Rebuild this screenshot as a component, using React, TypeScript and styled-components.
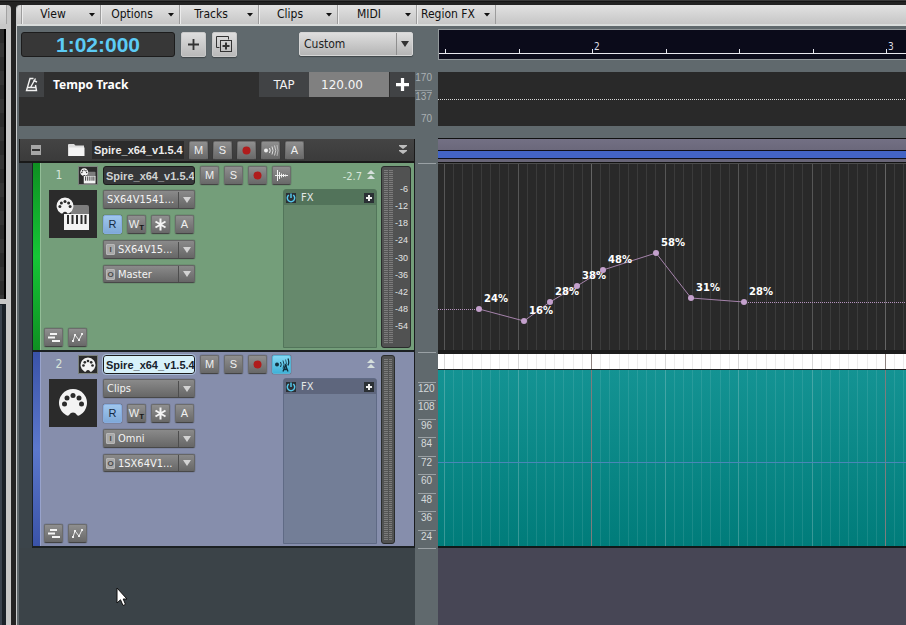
import React from "react";
import styled, { createGlobalStyle, css } from "styled-components";

const ui = `"DejaVu Sans Condensed", "DejaVu Sans", sans-serif`;
const sans = `"Liberation Sans", Arial, sans-serif`;

type Kind = "synth" | "midi";

const Global = createGlobalStyle`
  * { box-sizing: border-box; }
  body { margin: 0; background: #232323; font-family: ${ui}; overflow: hidden; }
  button, select, input { font-family: inherit; margin: 0; padding: 0; border: 0; border-radius: 0; }
  svg { display: block; flex: none; }
`;

const Page = styled.div`
  position: relative;
  display: flex;
  min-height: 100vh;
  padding-top: 5px;
  background: linear-gradient(#3a3a3a 0 1px, #161616 1px 2px, #232323 2px);
`;

/* neighbouring pane, only its right edge is visible */
const SidePane = styled.aside`
  display: flex;
  flex-direction: column;
  width: 11px;
  margin-right: 5px;
  background: #c8c8c8;
  border-radius: 0 4px 0 0;
`;
const SideHead = styled.div`
  height: 19px;
  margin-bottom: 5px;
  width: 7px;
  border-right: 1px solid #a2a2a2;
  background: linear-gradient(#e0e0e0, #cbcbcb);
`;
const SideList = styled.div`
  height: 270px;
  width: 6px;
  margin-bottom: 5px;
  border-right: 2px solid #000;
  background: repeating-linear-gradient(#2c2c2c 0 14px, #353535 14px 28px);
`;
const SideFill = styled.div`
  flex: 1;
  width: 6px;
  border-right: 4px solid #1b2229;
  border-top: 1px solid #1b2229;
  background: #3a434e;
`;

const Main = styled.main`
  flex: 1;
  min-width: 0;
  display: flex;
  flex-direction: column;
  border-left: 1px solid #c9cbcc;
  border-radius: 4px 0 0 0;
  background: #60696d;
`;

const MenuBar = styled.nav`
  display: flex;
  height: 21px;
  padding-left: 4px;
  border-bottom: 2px solid #d9dcdb;
  border-radius: 4px 0 0 0;
  background: linear-gradient(#e2e2e2, #c6c6c6);
`;
const MenuButton = styled.button`
  display: flex;
  align-items: center;
  width: 79px;
  border-left: 1px solid #9c9c9c;
  box-shadow: inset 1px 0 #ececec;
  background: transparent;
  color: #111;
  font-size: 12px;
  line-height: 18px;
  white-space: nowrap;
  &:last-child { width: 80px; border-right: 1px solid #9c9c9c; }
`;
const MenuText = styled.span`
  width: 62px;
  padding-bottom: 1px;
  text-align: center;
`;
const Spacer = styled.span`
  flex: 1;
  & + svg { margin-right: 5px; }
`;
const Gap = styled.div`
  height: 12px;
`;

const Row = styled.div<{ $h?: number; $grow?: boolean }>`
  display: grid;
  grid-template-columns: 396px 23px minmax(0, 1fr);
  margin-left: 2px;
  ${(p) => p.$h && css`min-height: ${p.$h}px;`}
  ${(p) => p.$grow && css`flex: 1;`}
`;

const Toolbar = styled.div`
  display: flex;
  align-items: flex-start;
  padding: 6px 2px 0;
`;
const TimeDisplay = styled.output`
  width: 154px;
  height: 25px;
  margin-right: 6px;
  border: 1px solid #1c1c1c;
  border-radius: 3px;
  background: #373737;
  color: #5ccbf5;
  font: bold 21px/23px ${sans};
  text-align: center;
`;
const LightButton = styled.button`
  display: grid;
  place-items: center;
  width: 25px;
  height: 25px;
  margin-right: 6px;
  border: 1px solid #c9c9c9;
  border-radius: 2px;
  background: linear-gradient(#dedede, #b9b9b9);
  box-shadow: 0 1px 1px #3f4548;
`;
const PresetBox = styled.div`
  display: flex;
  align-items: center;
  width: 114px;
  height: 24px;
  margin-left: auto;
  border: 1px solid #d6d6d6;
  border-radius: 2px;
  background: linear-gradient(#dedede, #b5b5b5);
  box-shadow: 0 1px 1px #3f4548;
`;
const PresetSelect = styled.select`
  appearance: none;
  flex: 1;
  height: 22px;
  padding-left: 4px;
  border-right: 1px solid #8e8e8e;
  background: transparent;
  color: #222;
  font-size: 12px;
`;
const PresetArrow = styled.span`
  display: grid;
  place-items: center;
  width: 15px;
`;

const RulerBox = styled.div`
  height: 31px;
  margin-top: 3px;
  border: 1px solid #92989b;
  border-right: 0;
  background: #0b0b1a;
`;

const TempoPanel = styled.section`
  background: #2f2f2f;
`;
const TempoHead = styled.div`
  display: flex;
  height: 25px;
`;
const TempoIcon = styled.button`
  display: grid;
  place-items: center;
  width: 25px;
  background: #414345;
`;
const TempoTitle = styled.h2`
  flex: 1;
  margin: 0;
  padding-left: 9px;
  color: #fff;
  font: bold 12px/25px "Noto Sans", sans-serif;
`;
const TapButton = styled.button`
  width: 50px;
  background: #414345;
  color: #f1f1f1;
  font-size: 13px;
`;
const TempoInput = styled.input`
  width: 80px;
  padding: 2px 0 0 12px;
  background: #808080;
  color: #f6f6f6;
  font: 12px/23px "DejaVu Sans", sans-serif;
`;
const TempoAdd = styled.button`
  display: grid;
  place-items: center;
  width: 25px;
  margin-left: 1px;
  background: #414345;
`;
const TempoLane = styled.div`
  padding-top: 27px;
  background: #292929;
`;

const TempoScale = styled.div`
  display: flex;
  flex-direction: column;
  padding-right: 6px;
  color: #aab0b3;
  font: 10px/12px ${sans};
  text-align: right;
`;
const ScaleText = styled.span<{ $line?: boolean; $last?: boolean }>`
  ${(p) => p.$line && css`margin-top: 6px; border-top: 1px solid #8f979b;`}
  ${(p) => p.$last && css`margin-top: 10px;`}
`;

const FolderBar = styled.header`
  display: flex;
  align-items: center;
  margin-top: 1px;
  border-left: 1px solid #1a1a1a;
  border-right: 1px solid #1a1a1a;
  border-bottom: 2px solid #191919;
  background: linear-gradient(#444, #3b3b3b);
`;
const FolderToggle = styled.button`
  display: grid;
  place-items: center;
  width: 32px;
  height: 22px;
  margin-right: 16px;
  background: transparent;
`;
const FolderName = styled.input`
  width: 92px;
  height: 18px;
  margin: 0 5px 0 7px;
  padding-left: 2px;
  background: #2b2b2b;
  color: #ececec;
  font: bold 11px/18px ${sans};
`;
const FolderMore = styled.button`
  margin-right: 7px;
  background: transparent;
`;
const FolderLane = styled.div`
  border-top: 1px solid #111;
  border-bottom: 1px solid #111;
  background: linear-gradient(#737084, #6b687b 11px, #101018 11px 12px, #4364c6 12px 19px, #101018 19px 20px, #696678 20px);
`;

const Btn = styled.button<{ $tone?: "blue" | "cyan" }>`
  display: grid;
  place-items: center;
  flex: none;
  width: 19px;
  height: 19px;
  margin-right: 5px;
  border: 1px solid #6c6c6c;
  border-bottom-color: #444;
  border-radius: 2px;
  background: linear-gradient(#8f8f8f, #686868);
  box-shadow: 0 0 1px #222;
  color: #f0f0f0;
  font: 11px/17px ${sans};
  ${(p) => p.$tone === "blue" && css`background: linear-gradient(#9fc6ee, #7fa9d8); border-color: #86ace0; color: #152a44;`}
  ${(p) => p.$tone === "cyan" && css`background: linear-gradient(#83d9f3, #3fb1d8); border-color: #55b4d4;`}
`;
const WriteMark = styled.span`
  display: flex;
  align-items: flex-end;
  line-height: 15px;
  sub { color: #161616; font: bold 8px/9px ${sans}; }
`;

const Indent = styled.div`
  display: flex;
  padding-left: 13px;
  background: #3b444a;
`;
const Track = styled.section<{ $kind: Kind }>`
  flex: 1;
  display: flex;
  border-left: 1px solid #1b2226;
  border-right: 1px solid #1a1c1f;
  border-bottom: 2px solid #1b2022;
  background: ${(p) => (p.$kind === "synth" ? "#749e7a" : "#868eac")};
`;
const ColorStrip = styled.div<{ $kind: Kind }>`
  width: 8px;
  border-right: 1px solid ${(p) => (p.$kind === "synth" ? "#93bd97" : "#98a3cc")};
  background: ${(p) =>
    p.$kind === "synth"
      ? "linear-gradient(#0f8f22, #16c636 50%, #0f8f22)"
      : "linear-gradient(#3a53a8, #5c78cc 50%, #3a53a8)"};
`;
const TrackMain = styled.div`
  flex: 1;
  display: flex;
  flex-direction: column;
  padding: 3px 4px 2px 2px;
`;
const TrackHead = styled.div`
  display: flex;
  height: 19px;
  margin-bottom: 4px;
`;
const TrackNumber = styled.span`
  width: 35px;
  padding-right: 3px;
  color: #d8e4da;
  font: 12px/19px ${ui};
  text-align: center;
`;
const TrackBadge = styled.span`
  display: grid;
  place-items: center;
  width: 20px;
  height: 19px;
  margin-right: 5px;
  border: 1px solid #7b817d;
  background: #2b2b2b;
`;
const TrackName = styled.input<{ $active?: boolean }>`
  width: 92px;
  height: 19px;
  margin-right: 5px;
  padding-left: 2px;
  border: 1px solid #1c1c1c;
  border-radius: 3px;
  background: ${(p) => (p.$active ? "#d7f1fa" : "#363739")};
  color: ${(p) => (p.$active ? "#17222c" : "#cfd2d2")};
  font: bold 11px/17px ${sans};
  outline: 1px solid ${(p) => (p.$active ? "#a9bfdb" : "transparent")};
`;
const Gain = styled.span`
  display: flex;
  margin: 0 2px 0 auto;
  gap: 5px;
  color: #d7e5d9;
  font: 11px/21px ${ui};
  svg { margin-top: 4px; }
`;
const TrackBody = styled.div`
  flex: 1;
  display: flex;
`;
const IconColumn = styled.div`
  display: flex;
  flex-direction: column;
  width: 60px;
  padding-top: 1px;
`;
const TrackIcon = styled.div`
  display: grid;
  place-items: center;
  width: 48px;
  height: 48px;
  margin-left: 6px;
  background: #2b2b2b;
`;
const LaneButtons = styled.div`
  display: flex;
  margin-top: auto;
  padding: 0 0 1px 1px;
`;
const Controls = styled.div`
  display: flex;
  flex-direction: column;
  gap: 6px;
  width: 92px;
  padding-top: 1px;
`;
const BtnRow = styled.div`
  display: flex;
`;
const Picker = styled.div`
  display: flex;
  align-items: center;
  height: 19px;
  border: 1px solid #656565;
  border-bottom-color: #484848;
  border-radius: 2px;
  background: linear-gradient(#8a8a8a, #666);
  box-shadow: 0 0 1px #222;
  svg { margin: 0 auto; }
  & + & { height: 18px; }
`;
const PortMark = styled.span`
  width: 9px;
  height: 11px;
  margin: 0 1px 0 2px;
  border: 1px solid #b8b8b8;
  border-radius: 1px;
  background: #a9a9a9;
  color: #4a4a4a;
  font: bold 8px/9px ${sans};
  text-align: center;
`;
const PickerSelect = styled.select<{ $port?: boolean }>`
  appearance: none;
  width: ${(p) => (p.$port ? 63 : 75)}px;
  height: 16px;
  padding-left: ${(p) => (p.$port ? 2 : 3)}px;
  border-right: 1px solid #4d4d4d;
  background: transparent;
  color: #f4f4f4;
  font-size: 11px;
`;

const FxBin = styled.div<{ $kind: Kind }>`
  width: 94px;
  margin-left: auto;
  border: 1px solid ${(p) => (p.$kind === "synth" ? "#52755a" : "#5f6a85")};
  border-radius: 3px 3px 0 0;
  background: ${(p) => (p.$kind === "synth" ? "#66896c" : "#737e97")};
`;
const FxHead = styled.div<{ $kind: Kind }>`
  display: flex;
  align-items: center;
  height: 15px;
  padding: 0 2px;
  background: ${(p) => (p.$kind === "synth" ? "#52735a" : "#5e667d")};
  color: #e3e8e6;
  font: 11px/15px ${ui};
  span { flex: 1; padding-left: 5px; }
`;
const TinyButton = styled.button`
  display: grid;
  place-items: center;
  width: 10px;
  height: 10px;
  background: #2b3035;
`;

const MeterWrap = styled.div<{ $wide: boolean }>`
  display: flex;
  width: ${(p) => (p.$wide ? 30 : 14)}px;
  margin: 3px ${(p) => (p.$wide ? 3 : 19)}px 2px 0;
  padding: 3px 2px;
  gap: 1px;
  border: 1px solid #2a2c2c;
  border-radius: 3px;
  background: #515252;
`;
const MeterBar = styled.div`
  width: 4px;
  background: repeating-linear-gradient(#7b7b7b 0 1px, #555 1px 2px);
`;
const MeterScale = styled.div`
  flex: 1;
  display: flex;
  flex-direction: column;
  justify-content: space-between;
  padding: 13px 0 12px;
  color: #e2e2e2;
  font: 9px/12px ${sans};
  text-align: right;
`;

const LaneScale = styled.div`
  display: flex;
  flex-direction: column;
  padding: 0 2px 0 3px;
`;
const ScaleTop = styled.div<{ $h?: number }>`
  height: ${(p) => p.$h ?? 2}px;
  border-top: 1px solid #9aa1a5;
`;
const ScaleStep = styled.div`
  flex: 1;
  padding-right: 4px;
  border-top: 1px solid #9aa1a5;
  color: #d5dadb;
  font: 10px/12px ${sans};
  text-align: right;
`;

const AutoLane = styled.div`
  overflow: hidden;
  border-top: 1px solid #4d4d4d;
  border-bottom: 2px solid #1c1c1c;
  background: #292929;
`;
const ClipLane = styled.div`
  display: flex;
  flex-direction: column;
  padding-top: 2px;
  overflow: hidden;
  border-bottom: 2px solid #101818;
  background: #1d1d1d;
`;
const ClipHead = styled.div`
  height: 15px;
  overflow: hidden;
  background: #fff;
`;
const ClipBody = styled.div`
  flex: 1;
  margin-top: 1px;
  overflow: hidden;
  background: linear-gradient(#149393, #007c7a);
`;
const EmptyTracks = styled.div`
  background: #3b4348;
`;
const EmptyLanes = styled.div`
  background: #474655;
`;
const Pointer = styled.svg`
  position: absolute;
  left: 116px;
  top: 587px;
`;

const barLines = Array.from({ length: 440 }, (_, i) => ({
  x: Math.round(6 + (i * 73.5) / 8),
  beat: i % 8 === 0,
  bar: i % 32 === 16,
}));

function GridLines({ minor, beat, bar }: { minor: string; beat: string; bar: string }) {
  return (
    <g shapeRendering="crispEdges">
      {barLines.map((l) => (
        <rect key={l.x} x={l.x} y="0" width="1" height="400" fill={l.bar ? bar : l.beat ? beat : minor} />
      ))}
    </g>
  );
}

function TimeRuler() {
  return (
    <svg width="100%" height="29" shapeRendering="crispEdges" aria-label="Measures">
      <rect y="23" width="100%" height="1" fill="#e8e8ee" />
      {barLines.filter((l) => l.beat).map((l) => (
        <rect key={l.x} x={l.x} y="19" width="1" height="4" fill="#e8e8ee" />
      ))}
      <g fill="#dcdce4" fontFamily={ui} fontSize="10">
        <text x="155" y="20">2</text>
        <text x="449" y="20">3</text>
      </g>
    </svg>
  );
}

const nodes = [
  { x: 41, y: 145, v: 24 },
  { x: 86, y: 157, v: 16 },
  { x: 112, y: 138, v: 28 },
  { x: 139, y: 122, v: 38 },
  { x: 165, y: 106, v: 48 },
  { x: 218, y: 89, v: 58 },
  { x: 253, y: 134, v: 31 },
  { x: 306, y: 138, v: 28 },
];

function Envelope() {
  return (
    <svg width="100%" height="186" aria-label="Automation envelope">
      <GridLines minor="#3b3b3b" beat="#565656" bar="#646464" />
      <line x1="0" y1="145.5" x2="41" y2="145.5" stroke="#b493bd" strokeDasharray="1 1" />
      <line x1="306" y1="138.5" x2="4000" y2="138.5" stroke="#b493bd" strokeDasharray="1 1" />
      <polyline points={nodes.map((n) => `${n.x},${n.y}`).join(" ")} fill="none" stroke="#a583ab" />
      {nodes.map((n) => (
        <g key={n.x}>
          <circle cx={n.x} cy={n.y} r="3" fill="#c3a0cc" />
          <text x={n.x + 5} y={n.y - 7} fill="#fff" fontFamily='"DejaVu Sans", sans-serif' fontSize="10" fontWeight="bold">
            {n.v}%
          </text>
        </g>
      ))}
    </svg>
  );
}

const Caret = ({ size = 7, color = "#111" }: { size?: number; color?: string }) => (
  <svg width={size} height={size} viewBox="0 0 8 8"><path d="M0 1h8L4 7z" fill={color} /></svg>
);
const MenuCaret = () => (
  <svg width="6" height="4" viewBox="0 0 6 4"><path d="M0 0h6L3 3.5z" fill="#111" /></svg>
);
const Plus = ({ size, color, weight }: { size: number; color: string; weight: number }) => (
  <svg width={size} height={size} viewBox="0 0 12 12">
    <path d="M6 0v12M0 6h12" stroke={color} strokeWidth={weight} />
  </svg>
);
const Chevrons = ({ up }: { up?: boolean }) => (
  <svg width="8" height="10" viewBox="0 0 8 10">
    {up ? <path d="M4 0l4 4H0zM4 5l4 4H0z" fill="#d5dfdc" /> : <path d="M0 0h8v1L4 4 0 1zM0 5h8v1L4 9 0 6z" fill="#bdbdbd" />}
  </svg>
);
const RecDot = () => (
  <svg width="9" height="9"><circle cx="4.5" cy="4.5" r="4" fill="#b01c1c" /></svg>
);
const Echo = ({ auto }: { auto?: boolean }) => (
  <svg width="17" height="17" viewBox="0 0 17 17" fill="none" stroke={auto ? "#12303e" : "#eee"}>
    <circle cx="4" cy="8.5" r="2" fill={auto ? "#12303e" : "#eee"} stroke="none" />
    <path d="M7.5 6q1.5 2.5 0 5" />
    <path d="M10 4.5q2 4 0 8" opacity=".85" />
    <path d="M12.5 3.5q2.5 5 0 10" opacity=".7" />
    {auto ? (
      <path d="M10 15.5l2.5-6.5 2.5 6.5M11 13.5h3M15 2.5q1.5 4 0 7" strokeWidth="1.3" />
    ) : (
      <path d="M15 3q2 5.5 0 11" opacity=".5" />
    )}
  </svg>
);
const Wave = () => (
  <svg width="15" height="15" viewBox="0 0 15 15" stroke="#f2f2f2" fill="none">
    <path d="M1 7.5h13M3.5 2v11M5.5 4v7M7.5 5.5v4M9.5 6v3M11.5 6.5v2" />
  </svg>
);
const Star = () => (
  <svg width="13" height="13" viewBox="0 0 13 13" stroke="#f4f4f4" strokeWidth="2">
    <path d="M6.5 .5v12M1.5 3.5l10 6M11.5 3.5l-10 6" />
  </svg>
);
const LanesIcon = () => (
  <svg width="13" height="11" viewBox="0 0 13 11" fill="#f4f4f4">
    <path d="M3 1h7v2H3zM1 4.5h7v2H1zM5 8h8v2H5z" />
  </svg>
);
const EnvIcon = () => (
  <svg width="13" height="11" viewBox="0 0 13 11" fill="#eee" stroke="#eee">
    <path d="M2 9l2-6 4 5 3-6" fill="none" />
    <path d="M1 8h2v2H1zM3 2h2v2H3zM7 7h2v2H7zM10 1h2v2h-2z" stroke="none" />
  </svg>
);
const Power = () => (
  <svg width="10" height="10" viewBox="0 0 10 10" fill="none" stroke="#55c6ea" strokeWidth="1.5">
    <path d="M5 .5V5M2.8 2a3.7 3.7 0 1 0 4.4 0" />
  </svg>
);
const Metronome = () => (
  <svg width="14" height="15" viewBox="0 0 14 15" fill="none" stroke="#f2f2f2" strokeWidth="1.4">
    <path d="M8.5 1.5H5L1.5 13.5h10L10.5 8M3 10.5h7.5M5.5 10.5l5-9" />
    <path d="M8.5 3.5L12 5" />
  </svg>
);
const Duplicate = () => (
  <svg width="17" height="17" viewBox="0 0 17 17" fill="none" stroke="#333">
    <path d="M3.5 11.5h-3V.5h12v3" />
    <rect x="4.5" y="4.5" width="11" height="11" />
    <path d="M10 6.5v7M6.5 10h7" strokeWidth="2" />
  </svg>
);
const Folder = () => (
  <svg width="17" height="14" viewBox="0 0 17 14">
    <path d="M0 13V2q0-1 1-1h5l1.5 1.5H16V13z" fill="#ddd" />
    <path d="M1 13V4.5h15.5V13z" fill="#f4f4f4" />
  </svg>
);

function DinPlug() {
  return (
    <g>
      <path d="M8 27A14 14 0 1 1 22 27Q19.5 28.5 18.5 26.5Q17.5 24.5 15 24.5Q12.5 24.5 11.5 26.5Q10.5 28.5 8 27z" fill="#f3f3f3" />
      <g fill="#2b2b2b">
        <circle cx="6.5" cy="16" r="2.5" />
        <circle cx="9" cy="10" r="2.5" />
        <circle cx="15" cy="7.5" r="2.5" />
        <circle cx="21" cy="10" r="2.5" />
        <circle cx="23.5" cy="16" r="2.5" />
      </g>
    </g>
  );
}
function KindIcon({ kind, size }: { kind: Kind; size: number }) {
  if (kind === "midi")
    return (
      <svg width={size} height={size} viewBox="0 0 30 30"><DinPlug /></svg>
    );
  return (
    <svg width={size} height={size} viewBox="0 0 34 34">
      <path d="M9 8h22a2 2 0 0 1 2 2v8H16z" fill="#7d7d7d" />
      <path d="M8 17h25v16H8z" fill="#f3f3f3" />
      <path d="M12 18v9M16.5 18v9M21 18v9M25.5 18v9M29.5 18v9" stroke="#2b2b2b" strokeWidth="2" />
      <g transform="scale(.6)"><DinPlug /></g>
    </svg>
  );
}

function PickerField({ label, port, value }: { label: string; port?: string; value: string }) {
  return (
    <Picker>
      {port && <PortMark>{port}</PortMark>}
      <PickerSelect $port={!!port} aria-label={label} defaultValue={value}>
        <option>{value}</option>
      </PickerSelect>
      <Caret size={8} color="#d2d2d2" />
    </Picker>
  );
}

interface TrackProps {
  n: number;
  kind: Kind;
  gain?: string;
  source: string;
  input: string;
  output: string;
  active?: boolean;
}

function TrackStrip({ n, kind, gain, source, input, output, active }: TrackProps) {
  return (
    <Indent>
      <Track $kind={kind} aria-label={`Track ${n}`}>
        <ColorStrip $kind={kind} />
        <TrackMain>
          <TrackHead>
            <TrackNumber>{n}</TrackNumber>
            <TrackBadge><KindIcon kind={kind} size={16} /></TrackBadge>
            <TrackName $active={active} aria-label="Track name" defaultValue="Spire_x64_v1.5.4" />
            <Btn aria-label="Mute">M</Btn>
            <Btn aria-label="Solo">S</Btn>
            <Btn aria-label="Record arm"><RecDot /></Btn>
            <Btn aria-label="Input echo" $tone={kind === "midi" ? "cyan" : undefined}>
              {kind === "midi" ? <Echo auto /> : <Wave />}
            </Btn>
            <Gain>{gain}<Chevrons up /></Gain>
          </TrackHead>
          <TrackBody>
            <IconColumn>
              <TrackIcon><KindIcon kind={kind} size={kind === "midi" ? 30 : 34} /></TrackIcon>
              <LaneButtons>
                <Btn aria-label="Take lanes"><LanesIcon /></Btn>
                <Btn aria-label="Automation lanes"><EnvIcon /></Btn>
              </LaneButtons>
            </IconColumn>
            <Controls>
              <PickerField label="Edit filter" value={source} />
              <BtnRow>
                <Btn $tone="blue" aria-label="Read automation">R</Btn>
                <Btn aria-label="Write automation"><WriteMark>W<sub>T</sub></WriteMark></Btn>
                <Btn aria-label="Freeze"><Star /></Btn>
                <Btn aria-label="Archive">A</Btn>
              </BtnRow>
              <PickerField label="Input" port="I" value={input} />
              <PickerField label="Output" port="O" value={output} />
            </Controls>
            <FxBin $kind={kind}>
              <FxHead $kind={kind}>
                <TinyButton aria-label="Bypass effects"><Power /></TinyButton>
                <span>FX</span>
                <TinyButton aria-label="Add effect"><Plus size={6} color="#eee" weight={4} /></TinyButton>
              </FxHead>
            </FxBin>
          </TrackBody>
        </TrackMain>
        <MeterWrap $wide={kind === "synth"}>
          <MeterBar />
          <MeterBar />
          {kind === "synth" && (
            <MeterScale>
              {[6, 12, 18, 24, 30, 36, 42, 48, 54].map((v) => <span key={v}>-{v}</span>)}
            </MeterScale>
          )}
        </MeterWrap>
      </Track>
    </Indent>
  );
}

export default function App() {
  return (
    <Page>
      <Global />
      <SidePane>
        <SideHead />
        <SideList />
        <SideFill />
      </SidePane>
      <Main>
        <MenuBar>
          {["View", "Options", "Tracks", "Clips", "MIDI", "Region FX"].map((m) => (
            <MenuButton key={m}><MenuText>{m}</MenuText><Spacer /><MenuCaret /></MenuButton>
          ))}
        </MenuBar>

        <Row $h={46}>
          <Toolbar>
            <TimeDisplay>1:02:000</TimeDisplay>
            <LightButton aria-label="Add track"><Plus size={11} color="#333" weight={2} /></LightButton>
            <LightButton aria-label="Duplicate track"><Duplicate /></LightButton>
            <PresetBox>
              <PresetSelect aria-label="Track control preset" defaultValue="Custom"><option>Custom</option></PresetSelect>
              <PresetArrow><Caret size={8} color="#333" /></PresetArrow>
            </PresetBox>
          </Toolbar>
          <div />
          <RulerBox><TimeRuler /></RulerBox>
        </Row>

        <Row $h={54}>
          <TempoPanel>
            <TempoHead>
              <TempoIcon aria-label="Metronome"><Metronome /></TempoIcon>
              <TempoTitle>Tempo Track</TempoTitle>
              <TapButton>TAP</TapButton>
              <TempoInput aria-label="Tempo" defaultValue="120.00" />
              <TempoAdd aria-label="Add tempo"><Plus size={13} color="#fff" weight={3} /></TempoAdd>
            </TempoHead>
          </TempoPanel>
          <TempoScale>
            <ScaleText>170</ScaleText>
            <ScaleText $line>137</ScaleText>
            <ScaleText $last>70</ScaleText>
          </TempoScale>
          <TempoLane>
            <svg width="100%" height="1" shapeRendering="crispEdges">
              <line x1="0" y1="0.5" x2="4000" y2="0.5" stroke="#d8d8d8" strokeDasharray="1 1" />
            </svg>
          </TempoLane>
        </Row>

        <Gap />

        <Row $h={25}>
          <FolderBar>
            <FolderToggle aria-label="Collapse folder" aria-expanded="true">
              <svg width="10" height="10"><rect width="10" height="10" fill="#a6a6a6" /><rect x="1" y="4" width="8" height="2" fill="#333" /></svg>
            </FolderToggle>
            <Folder />
            <FolderName aria-label="Folder name" defaultValue="Spire_x64_v1.5.4" />
            <Btn aria-label="Mute">M</Btn>
            <Btn aria-label="Solo">S</Btn>
            <Btn aria-label="Record arm"><RecDot /></Btn>
            <Btn aria-label="Input echo"><Echo /></Btn>
            <Btn aria-label="Archive">A</Btn>
            <Spacer />
            <FolderMore aria-label="Expand"><Chevrons /></FolderMore>
          </FolderBar>
          <div />
          <FolderLane />
        </Row>

        <Row $h={189}>
          <TrackStrip n={1} kind="synth" gain="-2.7" source="SX64V1541..." input="SX64V15..." output="Master" />
          <LaneScale><ScaleTop /></LaneScale>
          <AutoLane><Envelope /></AutoLane>
        </Row>

        <Row $h={196}>
          <TrackStrip n={2} kind="midi" source="Clips" input="Omni" output="1SX64V1..." active />
          <LaneScale>
            <ScaleTop $h={30} />
            {[120, 108, 96, 84, 72, 60, 48, 36, 24].map((v) => <ScaleStep key={v}>{v}</ScaleStep>)}
          </LaneScale>
          <ClipLane>
            <ClipHead>
              <svg width="100%" height="15"><GridLines minor="#ececec" beat="#d8d8d8" bar="#8d8380" /></svg>
            </ClipHead>
            <ClipBody>
              <svg width="100%" height="176">
                <GridLines minor="#ffffff18" beat="#b8d8d84d" bar="#7d7d7d" />
                <rect y="92" width="100%" height="1" fill="#4a86b8" />
              </svg>
            </ClipBody>
          </ClipLane>
        </Row>

        <Row $grow>
          <EmptyTracks />
          <LaneScale><ScaleTop /></LaneScale>
          <EmptyLanes />
        </Row>
      </Main>
      <Pointer width="13" height="20" viewBox="0 0 13 20" aria-hidden="true">
        <path d="M1 1v15l3.5-3.2L7 18.5l2.5-1.1L7.2 12H11z" fill="#fff" stroke="#111" />
      </Pointer>
    </Page>
  );
}
